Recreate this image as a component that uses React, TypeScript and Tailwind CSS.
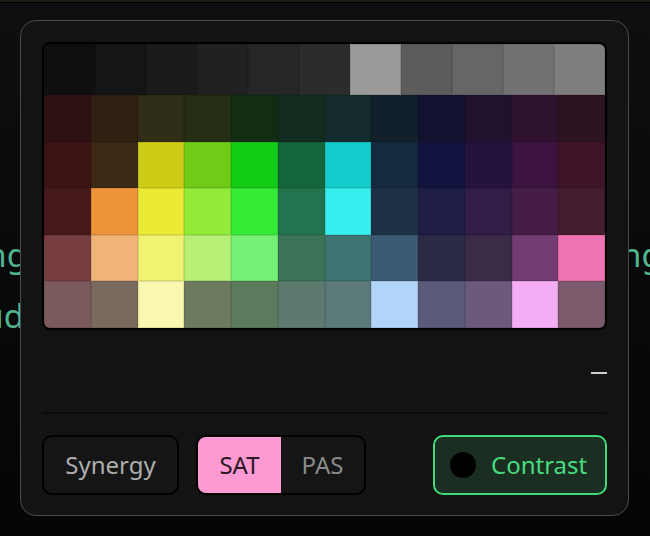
import React from "react";

const grays = ["#0f0f0f", "#151515", "#1b1b1b", "#212121", "#262626", "#2c2c2c", "#9a9a9a", "#5c5c5c", "#666666", "#727272", "#7e7e7e"];

const rows = [
  ["#2e1112", "#2f2012", "#302e16", "#232e13", "#112e12", "#122c20", "#142c2e", "#12202c", "#121230", "#20122f", "#2e1230", "#2e1320"],
  ["#3d1414", "#3d2914", "#cdcc16", "#6fcc16", "#13cc16", "#13663c", "#13cccc", "#132a3f", "#13133f", "#25133f", "#3d1340", "#3f1328"],
  ["#461a1c", "#ed9338", "#ebeb36", "#92eb38", "#36eb36", "#22744f", "#38eded", "#1d3146", "#1d1d46", "#311d46", "#461d46", "#461d2e"],
  ["#773d40", "#f1b378", "#f1f172", "#b6f176", "#74f174", "#3d7459", "#3d7474", "#3d5a74", "#2b2b46", "#3a2b46", "#733d74", "#f074b3"],
  ["#7a5a5d", "#7a6a5d", "#f8f8b0", "#6e7a5d", "#5c7a5c", "#5c7a6e", "#5c7a7a", "#b0d5f8", "#5a5a7a", "#6b5a7a", "#f5aef5", "#7a5a6b"],
];

function Swatch({ color }: { color: string }) {
  return <div className="border border-black/10" style={{ backgroundColor: color }} />;
}

export default function App() {
  return (
    <div
      className="relative h-[536px] w-[650px] overflow-hidden bg-gradient-to-b from-[#0e0f11] to-[#050505]"
      style={{ fontFamily: '"Noto Sans", sans-serif' }}
    >
      <div className="h-[3px] bg-[#1c1c16] border-b border-black" />

      {/* page content behind the popover */}
      <div className="pt-[221px] text-[33px] leading-[61px] text-[#52b58e]">
        <div className="flex justify-between">
          <div className="flex w-[27px] justify-end overflow-hidden whitespace-nowrap">Loading</div>
          <div className="flex w-[29px] overflow-hidden whitespace-nowrap">ngs</div>
        </div>
        <div className="flex justify-between">
          <div className="flex w-[24px] justify-end overflow-hidden whitespace-nowrap">Cloud</div>
        </div>
      </div>

      {/* popover */}
      <div className="absolute left-[20px] top-[20px] flex w-[609px] flex-col rounded-[16px] border border-[#4a4a4a] bg-[#131313] px-[21px] pb-[20px] pt-[21px]">
        <div className="flex h-[288px] flex-col overflow-hidden rounded-[8px] border-2 border-black">
          <div className="grid h-[51px] grid-cols-11">
            {grays.map((c, i) => (
              <Swatch key={i} color={c} />
            ))}
          </div>
          {rows.map((r, i) => (
            <div key={i} className="grid flex-1 grid-cols-12">
              {r.map((c, j) => (
                <Swatch key={j} color={c} />
              ))}
            </div>
          ))}
        </div>

        <div className="flex h-[82px] items-center justify-end pt-[3px]">
          <div className="h-[2px] w-[16px] bg-[#cfcfcf]" />
        </div>

        <div className="h-[2px] bg-[#0a0a0a]" />

        <div className="mt-[21px] flex h-[60px] items-stretch text-[24px]">
          <button className="w-[137px] rounded-[10px] border-2 border-black bg-[#151515] text-[#adadad]">
            Synergy
          </button>
          <div className="ml-[17px] flex w-[170px] overflow-hidden rounded-[10px] border-2 border-black bg-[#151515]">
            <button className="w-[83px] bg-[#ff99d4] text-[#2a1a24]">SAT</button>
            <button className="flex-1 text-[#8a8a8a]">PAS</button>
          </div>
          <button className="ml-auto flex w-[174px] items-center gap-[15px] rounded-[10px] border-2 border-[#3fdc7a] bg-[#1b2e22] pl-[15px] text-[#48dc80]">
            <span className="h-[26px] w-[26px] rounded-full bg-black" />
            Contrast
          </button>
        </div>
      </div>
    </div>
  );
}
